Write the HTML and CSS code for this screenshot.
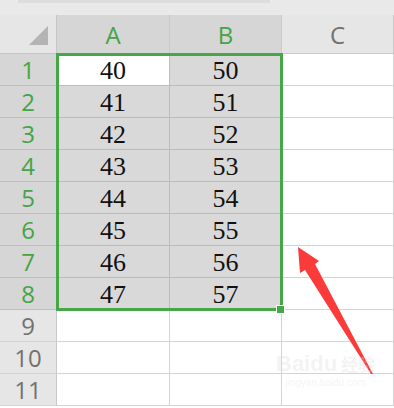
FILE: index.html
```html
<!DOCTYPE html>
<html lang="zh-CN">
<head>
  <meta charset="UTF-8">
  <title>Sheet</title>
  <link rel="stylesheet" href="styles.css">
</head>
<body>
  <div class="topbar"><div class="topbar-line"></div></div>

  <div class="sheet">
    <div class="corner"><span class="corner-tri"></span></div>
    <div class="colhead on">A</div>
    <div class="colhead on">B</div>
    <div class="colhead">C</div>

    <div class="rowhead on">1</div><div class="cell active">40</div><div class="cell sel">50</div><div class="cell"></div>
    <div class="rowhead on">2</div><div class="cell sel">41</div><div class="cell sel">51</div><div class="cell"></div>
    <div class="rowhead on">3</div><div class="cell sel">42</div><div class="cell sel">52</div><div class="cell"></div>
    <div class="rowhead on">4</div><div class="cell sel">43</div><div class="cell sel">53</div><div class="cell"></div>
    <div class="rowhead on">5</div><div class="cell sel">44</div><div class="cell sel">54</div><div class="cell"></div>
    <div class="rowhead on">6</div><div class="cell sel">45</div><div class="cell sel">55</div><div class="cell"></div>
    <div class="rowhead on">7</div><div class="cell sel">46</div><div class="cell sel">56</div><div class="cell"></div>
    <div class="rowhead on">8</div><div class="cell sel">47</div><div class="cell sel">57</div><div class="cell"></div>
    <div class="rowhead">9</div><div class="cell"></div><div class="cell"></div><div class="cell"></div>
    <div class="rowhead">10</div><div class="cell"></div><div class="cell"></div><div class="cell"></div>
    <div class="rowhead">11</div><div class="cell"></div><div class="cell"></div><div class="cell"></div>

    <!-- selection frame over A1:B8 -->
    <div class="selbox"><span class="handle"></span></div>
  </div>

  <!-- red arrow pointing at the selection -->
  <svg class="arrow" width="394" height="408" viewBox="0 0 394 408">
    <polygon points="298,247 319,261 315,264 373,374 371,374 305,270 300,273" fill="#fb3a3a"/>
  </svg>

  <div class="watermark">
    <div class="wm-big">Baidu<span class="wm-cn">经验</span></div>
    <div class="wm-small">jingyan.baidu.com</div>
  </div>
</body>
</html>
```

FILE: styles.css
```css
* {
  box-sizing: border-box;
}
body {
  margin: 0;
  width: 394px;
  height: 408px;
  overflow: hidden;
  background: #ffffff;
  position: relative;
}
.topbar {
  height: 15px;
  background: #e9e9e9;
}
.topbar-line {
  margin-left: 18px;
  width: 252px;
  height: 3px;
  background: #dddddd;
}
.sheet {
  position: relative;
  display: grid;
  grid-template-columns: 57px 113px 112px 112px;
  grid-template-rows: 39px;
  grid-auto-rows: 32px;
}
.corner {
  background: #e6e6e6;
  border-right: 1px solid #c6c6c6;
  border-bottom: 1px solid #c6c6c6;
  position: relative;
}
.corner-tri {
  position: absolute;
  left: 29px;
  top: 11px;
  width: 0;
  height: 0;
  border-left: 19px solid transparent;
  border-bottom: 19px solid #b4b4b4;
}
.colhead,
.rowhead {
  display: flex;
  align-items: center;
  justify-content: center;
  font-family: "Open Sans", "Noto Sans", sans-serif;
  font-size: 24px;
  color: #717171;
  background: #e6e6e6;
  border-right: 1px solid #c9c9c9;
  border-bottom: 1px solid #c9c9c9;
}
.colhead.on,
.rowhead.on {
  color: #45a445;
  background: #d6d6d6;
}
.rowhead {
  border-bottom-color: #d4d4d4;
}
.rowhead.on {
  border-bottom-color: #bdbdbd;
}
.cell {
  display: flex;
  align-items: center;
  justify-content: center;
  padding-top: 3px;
  font-family: "Liberation Serif", "DejaVu Serif", serif;
  font-size: 26px;
  color: #111111;
  background: #ffffff;
  border-right: 1px solid #d4d4d4;
  border-bottom: 1px solid #d4d4d4;
}
.cell.sel {
  background: #d9d9d9;
  border-color: #bcbcbc;
}
.cell.active {
  border-color: #bcbcbc;
}
.selbox {
  position: absolute;
  left: 56px;
  top: 38px;
  width: 227px;
  height: 258px;
  border: 3px solid #45a745;
  pointer-events: none;
}
.handle {
  position: absolute;
  right: -4px;
  bottom: -5px;
  width: 7px;
  height: 7px;
  background: #45a745;
  outline: 1px solid #ffffff;
}
.arrow {
  position: absolute;
  left: 0;
  top: 0;
}
.watermark {
  position: absolute;
  left: 276px;
  top: 352px;
  color: rgba(215, 215, 215, 0.3);
  font-family: "Liberation Sans", sans-serif;
  text-align: center;
}
.wm-big {
  font-size: 22px;
  font-weight: bold;
  line-height: 24px;
}
.wm-cn {
  font-family: "Noto Sans CJK SC", sans-serif;
  font-size: 17px;
  margin-left: 4px;
}
.wm-small {
  font-size: 10px;
  line-height: 14px;
}
```
